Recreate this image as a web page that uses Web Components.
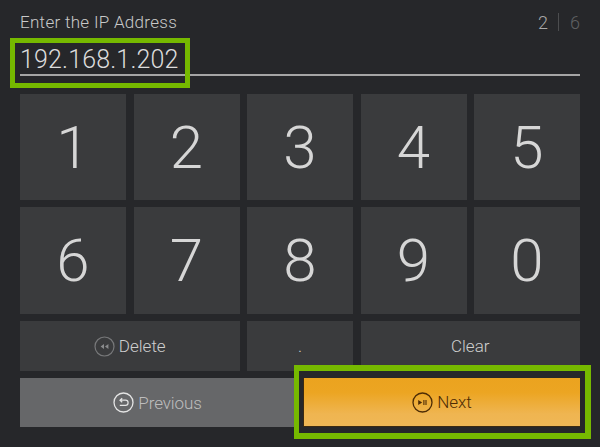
<!DOCTYPE html>
<html>
<head>
<meta charset="utf-8">
<style>
	html, body { margin: 0; padding: 0; background: #26272a; }
	body { width: 600px; height: 447px; overflow: hidden; font-family: "Liberation Sans", Arial, sans-serif; }
</style>
</head>
<body>
<ip-screen>
	<ip-header slot="header" label="Enter the IP Address" value="192.168.1.202" step="2" total="6"></ip-header>
	<num-key>1</num-key><num-key>2</num-key><num-key>3</num-key><num-key>4</num-key><num-key>5</num-key>
	<num-key>6</num-key><num-key>7</num-key><num-key>8</num-key><num-key>9</num-key><num-key>0</num-key>
	<action-key class="wide">
		<svg slot="icon" width="21" height="21" viewBox="0 0 21 21" fill="none" stroke="#77787a" stroke-width="1.2"><circle cx="10.5" cy="10.5" r="9.5"/><path d="M10 8v5l-3.4-2.5zM14.4 8v5L11 10.5z" fill="#8a8b8d" stroke="none"/></svg>
		Delete
	</action-key>
	<action-key>.</action-key>
	<action-key class="wide">Clear</action-key>
	<nav-buttons slot="nav"></nav-buttons>
</ip-screen>

<script>
const IpScreenTemplate = document.createElement('template');
IpScreenTemplate.innerHTML = `
	<style>
		:host {
			display: block;
			position: relative;
			box-sizing: border-box;
			width: 600px;
			height: 447px;
			padding: 0 20px;
			background: #26272a;
		}
		.keys {
			display: grid;
			grid-template-columns: repeat(5, 1fr);
			grid-template-rows: 106px 107px 50px;
			column-gap: 7.5px;
			row-gap: 7px;
		}
		.hl {
			position: absolute;
			box-sizing: border-box;
			border: 5px solid #76b900;
		}
		.hl.ip { left: 10px; top: 38px; width: 180px; height: 50px; }
		.hl.next { left: 294px; top: 365px; width: 297px; height: 74px; border-width: 6px 6px 6px 5px; }
	</style>
	<slot name="header"></slot>
	<div class="keys"><slot></slot></div>
	<slot name="nav"></slot>
	<div class="hl ip"></div>
	<div class="hl next"></div>
`;

class IpScreen extends HTMLElement {
	constructor() {
		super();
		this.attachShadow({mode: 'open'}).append(IpScreenTemplate.content.cloneNode(true));
	}
}
customElements.define('ip-screen', IpScreen);

class IpHeader extends HTMLElement {
	constructor() {
		super();
		this.attachShadow({mode: 'open'}).innerHTML = `
			<style>
				:host { display: block; height: 94px; box-sizing: border-box; padding-top: 12px; color: #c9c9c9; font-family: "Roboto", "Liberation Sans", sans-serif; font-weight: 300; }
				.top { display: flex; justify-content: space-between; align-items: center; height: 20px; }
				.label { font-size: 17px; letter-spacing: 0.3px; }
				.steps { display: flex; align-items: center; font-size: 18px; color: #a9a9a9; }
				.steps i { width: 1px; height: 18px; background: #4c4d4f; margin: 0 11px 0 10px; }
				.steps span:last-child { color: #5f6062; }
				.value { margin-top: 15px; height: 26px; line-height: 26px; font-size: 25px; color: #dcdcdc; letter-spacing: 0.15px; }
				.line { margin-top: 1px; height: 2px; background: #a5a5a5; }
			</style>
			<div class="top">
				<span class="label">${this.getAttribute('label')}</span>
				<span class="steps"><span>${this.getAttribute('step')}</span><i></i><span>${this.getAttribute('total')}</span></span>
			</div>
			<div class="value">${this.getAttribute('value')}</div>
			<div class="line"></div>
		`;
	}
}
customElements.define('ip-header', IpHeader);

class NumKey extends HTMLElement {
	constructor() {
		super();
		this.attachShadow({mode: 'open'}).innerHTML = `
			<style>
				:host { display: flex; align-items: center; justify-content: center; background: #3a3b3d; color: #d6d6d6; font-family: "Roboto", "Liberation Sans", sans-serif; font-weight: 300; font-size: 60px; }
			</style>
			<slot></slot>
		`;
	}
}
customElements.define('num-key', NumKey);

class ActionKey extends HTMLElement {
	constructor() {
		super();
		this.attachShadow({mode: 'open'}).innerHTML = `
			<style>
				:host { display: flex; align-items: center; justify-content: center; gap: 4px; background: #3a3b3d; color: #cfcfcf; font-family: "Roboto", "Liberation Sans", sans-serif; font-weight: 300; font-size: 17px; }
				:host(.wide) { grid-column: span 2; }
				::slotted(svg) { display: block; }
			</style>
			<slot name="icon"></slot><slot></slot>
		`;
	}
}
customElements.define('action-key', ActionKey);

class NavButtons extends HTMLElement {
	constructor() {
		super();
		this.attachShadow({mode: 'open'}).innerHTML = `
			<style>
				:host { display: flex; justify-content: space-between; margin-top: 7px; height: 49px; font-family: "Roboto", "Liberation Sans", sans-serif; font-weight: 300; font-size: 17px; }
				.btn { display: flex; align-items: center; justify-content: center; gap: 4px; }
				.prev { width: 275px; background: #666769; color: #bdbdbd; }
				.next { width: 277px; background: linear-gradient(#eba31f 0%, #eca522 30%, #efb551 75%, #efb755 100%); color: #4d2c05; border: solid #3b2a12; border-width: 0 0 1px 1px; box-sizing: border-box; }
			</style>
			<div class="btn prev">
				<svg width="21" height="21" viewBox="0 0 21 21" fill="none" stroke="#e4e4e4" stroke-width="1.3"><circle cx="10.5" cy="10.5" r="9.5"/><path d="M7.3 8.2h5.2a2.6 2.6 0 0 1 0 5.2H6.8M9.2 6.2L7 8.2l2.2 2" stroke-width="1.2"/></svg>
				<span style="letter-spacing:-0.1px">Previous</span>
			</div>
			<div class="btn next">
				<svg width="21" height="21" viewBox="0 0 21 21" fill="none" stroke="#4d2c05" stroke-width="1.3"><circle cx="10.5" cy="10.5" r="9.5"/><path d="M6.2 8v5l4-2.5z" fill="#4d2c05" stroke="none"/><path d="M11.9 8v5M14 8v5" stroke-width="1.1"/></svg>
				Next
			</div>
		`;
	}
}
customElements.define('nav-buttons', NavButtons);
</script>
</body>
</html>
